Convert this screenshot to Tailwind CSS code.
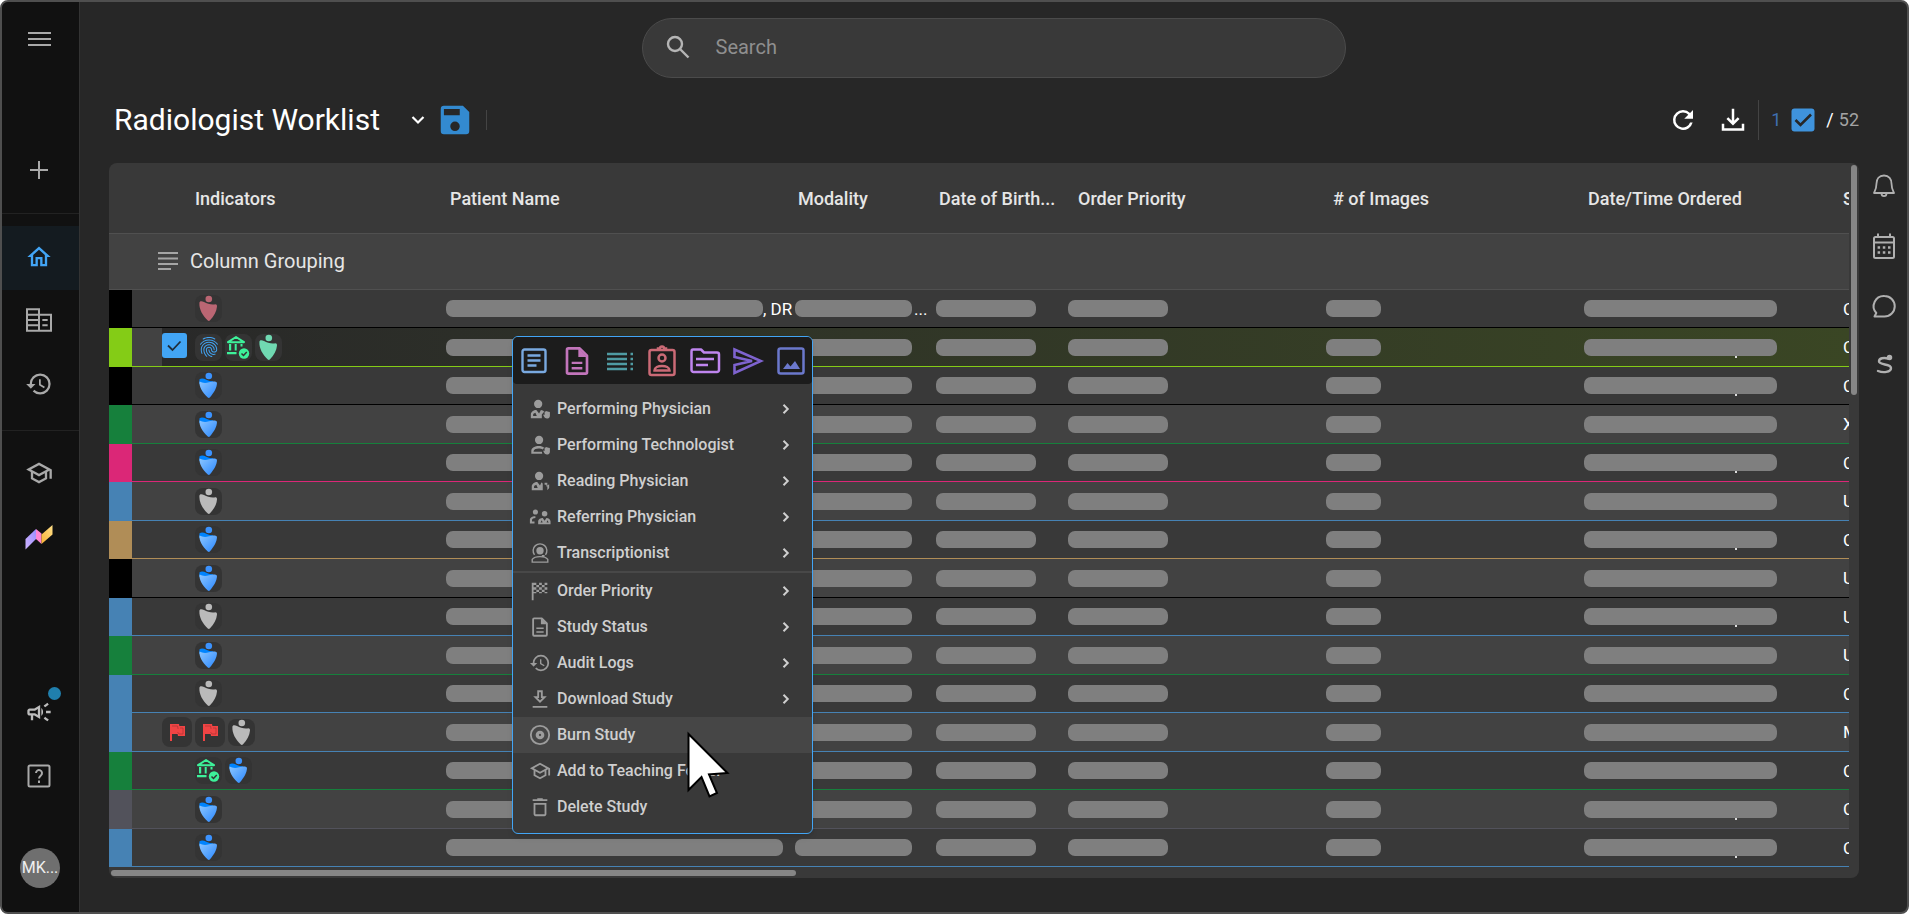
<!DOCTYPE html>
<html lang="en">
<head>
  <meta charset="UTF-8">
  <meta name="viewport" content="width=device-width, initial-scale=1.0">
  <title>Radiologist Worklist</title>
  <script src="https://cdn.jsdelivr.net/npm/@tailwindcss/browser@4"></script>
</head>
<body class="bg-white font-['Roboto',sans-serif] text-[#e6e6e6]">

  <!-- Icon sprite -->
  <svg class="absolute h-0 w-0" aria-hidden="true">
    <defs>
      <linearGradient id="drop" x1="0" y1="0" x2="1" y2="1">
        <stop offset="0" stop-color="#8cc6ff"/>
        <stop offset="0.8" stop-color="#3c93ff"/>
      </linearGradient>
      <symbol id="i-person" viewBox="0 0 27 27">
        <circle cx="13.8" cy="4" r="3.3"/>
        <path d="M4.4 8c0-2 2.200-2.200 4.600-.9 3 1.600 7 2.800 10.600 2.300 1.800-.2 2.500.5 2.400 2-.4 5-3 9.500-7.200 14.200-.6.6-1.400.6-2 0C7.500 20.500 4 14 4.400 8z"/>
      </symbol>
      <symbol id="i-person-blue" viewBox="0 0 27 27">
        <circle cx="13.8" cy="4" r="3.300" fill="#3c93ff"/>
        <path fill="#0084ff" d="M4.400 7.400c2-1.600 4.500-.9 7 .3 2.400 1 4.500 1.500 7 1.600l-4 4L4.500 12z"/>
        <path fill="url(#drop)" d="M4.400 9.600c3 1.400 6 1.900 9.600.7 3-1 7-1.500 8 .5 0 5-3 9.900-7.200 14.800-.6.6-1.400.6-2 0C7 20.500 4.200 15 4.400 9.600z"/>
      </symbol>
      <symbol id="i-library" viewBox="0 0 27 27">
        <path fill="none" stroke="#3df29a" stroke-width="2" stroke-linejoin="round" d="M3 8.200L11 3l8 5.200z"/>
        <path fill="#3df29a" d="M4 10h2.200v6.500H4zM9.700 10h2v6.500h-2zM15.500 10h2v2.500h-2zM2 18h9.500v2.300H2z"/>
        <circle cx="19" cy="19.500" r="5.200" fill="#3df29a"/>
        <path fill="none" stroke="#333" stroke-width="1.500" d="M16.500 19.500l2 2 3.300-3.600"/>
      </symbol>
      <symbol id="i-finger" viewBox="0 0 24 24">
        <path d="M17.81 4.47c-.08 0-.16-.02-.23-.06C15.66 3.42 14 3 12.01 3c-1.98 0-3.86.47-5.570 1.410-.24.13-.54.04-.68-.2-.13-.24-.04-.55.2-.68C7.820 2.520 9.860 2 12.010 2c2.130 0 3.990.47 6.030 1.520.25.13.34.43.21.67-.09.18-.26.28-.44.28zM3.500 9.720c-.1 0-.2-.03-.29-.09-.23-.16-.28-.47-.12-.7.99-1.400 2.250-2.500 3.750-3.270C9.980 4.040 14 4.030 17.150 5.650c1.500.77 2.760 1.860 3.750 3.250.16.22.11.54-.12.7-.23.16-.54.11-.7-.12-.9-1.260-2.040-2.250-3.390-2.940-2.870-1.470-6.540-1.470-9.400.01-1.360.7-2.500 1.700-3.400 2.960-.08.14-.23.21-.39.21zm6.250 12.070c-.13 0-.26-.05-.35-.15-.87-.87-1.340-1.430-2.010-2.640-.69-1.230-1.050-2.730-1.050-4.340 0-2.970 2.540-5.390 5.660-5.390s5.660 2.420 5.660 5.390c0 .28-.22.5-.5.5s-.5-.22-.5-.5c0-2.420-2.090-4.390-4.660-4.390-2.570 0-4.660 1.970-4.660 4.390 0 1.440.32 2.770.93 3.850.64 1.150 1.080 1.640 1.850 2.420.19.2.19.51 0 .71-.11.1-.24.15-.37.15zm7.170-1.850c-1.190 0-2.240-.3-3.100-.89-1.490-1.010-2.380-2.650-2.380-4.390 0-.28.22-.5.5-.5s.5.22.5.5c0 1.410.72 2.740 1.940 3.560.71.48 1.540.71 2.540.71.24 0 .64-.03 1.040-.1.27-.05.53.13.58.41.05.27-.13.53-.41.58-.57.11-1.070.12-1.210.12zM14.910 22c-.04 0-.09-.01-.13-.02-1.590-.44-2.630-1.030-3.720-2.100-1.400-1.390-2.170-3.240-2.170-5.220 0-1.620 1.380-2.940 3.080-2.940 1.700 0 3.080 1.320 3.080 2.940 0 1.070.93 1.940 2.080 1.940s2.080-.87 2.080-1.940c0-3.770-3.250-6.830-7.250-6.830-2.840 0-5.440 1.580-6.610 4.030-.39.81-.59 1.760-.59 2.800 0 .78.07 2.010.67 3.610.1.26-.03.55-.29.64-.26.1-.55-.04-.64-.29-.49-1.310-.73-2.610-.73-3.960 0-1.200.23-2.290.68-3.240 1.330-2.790 4.280-4.600 7.510-4.600 4.550 0 8.250 3.510 8.250 7.830 0 1.620-1.380 2.940-3.080 2.940s-3.080-1.320-3.080-2.940c0-1.070-.93-1.940-2.080-1.940s-2.080.87-2.080 1.940c0 1.710.66 3.310 1.870 4.510.95.94 1.860 1.460 3.270 1.850.27.07.42.35.35.61-.05.23-.26.38-.47.38z"/>
      </symbol>
      <symbol id="i-flag" viewBox="0 0 24 24">
        <path d="M14.400 6L14 4H5v17h2v-7h5.600l.4 2h7V6z"/>
        <path fill="none" stroke="#a33" stroke-width="0.700" d="M7 6h5.500l.6 3M12.500 12l1.500 2h4V8h-3"/>
      </symbol>
      <symbol id="i-school" viewBox="0 0 24 24">
        <path d="M12 3L1 9l4 2.180v6L12 21l7-3.820v-6l2-1.090V17h2V9L12 3zm6.820 6L12 12.720 5.180 9 12 5.280 18.820 9zM17 15.990l-5 2.730-5-2.730v-3.720L12 15l5-2.730v3.720z"/>
      </symbol>
      <symbol id="i-history" viewBox="0 0 24 24">
        <path d="M13 3a9 9 0 0 0-9 9H1l3.890 3.890.07.14L9 12H6c0-3.870 3.130-7 7-7s7 3.130 7 7-3.130 7-7 7c-1.930 0-3.680-.79-4.940-2.060l-1.420 1.420A8.954 8.954 0 0 0 13 21a9 9 0 0 0 0-18zm-1 5v5l4.280 2.540.72-1.210-3.500-2.080V8H12z"/>
      </symbol>
      <symbol id="i-doc" viewBox="0 0 24 24">
        <path fill="none" stroke="currentColor" stroke-width="2" stroke-linejoin="round" d="M14 2.500H5.500a1 1 0 0 0-1 1v17a1 1 0 0 0 1 1h13a1 1 0 0 0 1-1V8z"/>
        <path fill="currentColor" d="M13 2.500V9h6.500zM8 12.500h8v1.800H8zm0 4h8v1.800H8z"/>
      </symbol>
      <symbol id="i-doctor-hand" viewBox="0 0 24 24">
        <circle cx="10" cy="6.500" r="4.500"/>
        <path d="M2 22v-4c0-3 3-5 6-5l3 4 2-3.800c1.600.2 2.700.8 3.500 1.800L14 18v4H2zm2.500-2.300h4L7 16c-1.500.5-2.500 1.200-2.500 2.300z" fill-rule="evenodd"/>
        <path d="M15.500 18.500c0-.8 1-.8 1.500 0V15c.3-.8 1-.8 1.300 0 .3-1 1.200-1 1.500 0 .3-.8 1.200-.8 1.500.3.400-.7 1.300-.5 1.500.3v3.900c0 3-5 4-6.300 1z"/>
      </symbol>
      <symbol id="i-tech-hand" viewBox="0 0 24 24">
        <circle cx="11" cy="6.500" r="4.500"/>
        <path d="M2.500 21.500v-3c0-6 11-7 14-3.500l-1.500 2c-3-2-9.500-1.200-10 1.500v.8h9l.5 2.200z"/>
        <path d="M15.500 18.500c0-.8 1-.8 1.500 0V15c.3-.8 1-.8 1.300 0 .3-1 1.200-1 1.500 0 .3-.8 1.200-.8 1.500.3.400-.7 1.300-.5 1.500.3v3.900c0 3-5 4-6.300 1z"/>
      </symbol>
      <symbol id="i-reader" viewBox="0 0 24 24">
        <circle cx="11" cy="6.500" r="4.500"/>
        <path d="M3 22v-4c0-3 3-5 6-5l3 4 1.500-3.500c1.300.3 1.500 1 1.500 2V22H3zm2.500-2.300h4L8 16c-1.500.5-2.500 1.200-2.500 2.300z" fill-rule="evenodd"/>
        <path d="M17 14h3v3l2-1.500v4L20 22v-4h-1v-2h-2z"/>
      </symbol>
      <symbol id="i-referring" viewBox="0 0 24 24">
        <circle cx="7" cy="6.500" r="2.800"/>
        <circle cx="17" cy="8.500" r="3"/>
        <path d="M1 19v-4c0-2.500 3-4 6-3.800V13c-2 .2-3.700.8-3.700 2.300V17H6v2zM10 20v-3c0-3 3-4 5-4l2 3 2-3c2.500.3 4.500 1.500 4.500 4v3zm2.500-2h2.300l-.8-2.500zm6.700 0h2.300l-1.500-2.500z" fill-rule="evenodd"/>
      </symbol>
      <symbol id="i-headset" viewBox="0 0 24 24">
        <circle cx="12" cy="9.500" r="4"/>
        <path fill="none" stroke="currentColor" stroke-width="1.500" d="M6 14a7.500 7.500 0 1 1 12 0M3.500 22v-3c3-4 14-4 17 0v3zM14 15h3"/>
      </symbol>
      <symbol id="i-checker" viewBox="0 0 24 24">
        <path d="M3 3h2v19H3zM5 3h3v2.500H5zM11 3h3v2.500h-3zM17 3h3v2.500h-3zM8 5.500h3V8H8zM14 5.500h3V8h-3zM5 8h3v2.500H5zM11 8h3v2.500h-3zM17 8h3v2.500h-3zM8 10.500h3V13H8zM14 10.500h3V13h-3zM5 13h3v1.500H5zM11 13h3v1.500h-3zM17 13h3v1.500h-3z"/>
      </symbol>
      <symbol id="i-arrow-down" viewBox="0 0 24 24">
        <path fill="none" stroke="currentColor" stroke-width="2" d="M10 3.500h4V10h3l-5 5-5-5h3zM4 20.500h16"/>
      </symbol>
      <symbol id="i-disc" viewBox="0 0 24 24">
        <circle cx="12" cy="12" r="10" fill="none" stroke="currentColor" stroke-width="2"/>
        <circle cx="12" cy="12" r="3" fill="none" stroke="currentColor" stroke-width="3.500"/>
      </symbol>
      <symbol id="i-trash" viewBox="0 0 24 24">
        <path fill="none" stroke="currentColor" stroke-width="2" d="M6 8.500h12V20a1 1 0 0 1-1 1H7a1 1 0 0 1-1-1zM4 4.500h16M9 3.500h6"/>
      </symbol>
      <symbol id="i-chevron" viewBox="0 0 24 24">
        <path fill="none" stroke="currentColor" stroke-width="4" d="M7 3.500l8.500 8.500L7 20.500"/>
      </symbol>
    </defs>
  </svg>

  <div class="relative flex h-screen min-h-[914px] overflow-hidden rounded-lg border-2 border-[#4f4f4f] bg-[#272727]">

    <!-- Left navigation -->
    <nav aria-label="Main" class="flex w-[78px] shrink-0 flex-col border-r border-[#333] bg-[#111] text-[#a9a9a9]">
      <button aria-label="Menu" class="mt-[5px] flex h-16 items-center justify-center pr-1">
        <svg class="h-6 w-6" viewBox="0 0 24 24" stroke="currentColor" stroke-width="2"><path d="M1 6h23M1 12h23M1 18h23"/></svg>
      </button>
      <button aria-label="New" class="mt-[67px] flex h-16 items-center justify-center pr-1">
        <svg class="h-6 w-6" viewBox="0 0 24 24" stroke="currentColor" stroke-width="2"><path d="M12 3v18M3 12h18"/></svg>
      </button>
      <div class="mt-[11px] mb-3 border-t border-[#222]"></div>
      <a href="#home" aria-label="Home" class="flex h-16 items-center justify-center bg-[#141b20] pr-1 pb-0.5 text-[#42a5f5]">
        <svg class="h-7 w-7" viewBox="0 0 24 24" fill="currentColor"><path d="M12 5.690l5 4.500V18h-2v-6H9v6H7v-7.810l5-4.500M12 3L2 12h3v8h6v-6h2v6h6v-8h3L12 3z"/></svg>
      </a>
      <a href="#facilities" aria-label="Facilities" class="flex h-16 items-center justify-center pr-1 pb-1">
        <svg class="h-8 w-8" viewBox="0 0 24 24" fill="none" stroke="currentColor" stroke-width="1.500"><path d="M3 4h9v16H3zM12 8h9v12h-9M3 8h9M3 12h9M3 16h9M14.500 12h4M14.500 16h4"/></svg>
      </a>
      <a href="#history" aria-label="History" class="flex h-16 items-center justify-center pr-1 pb-1">
        <svg class="h-7 w-7" fill="currentColor"><use href="#i-history"/></svg>
      </a>
      <div class="mt-3 mb-2.5 border-t border-[#222]"></div>
      <a href="#teaching" aria-label="Teaching" class="flex h-16 items-center justify-center pr-1">
        <svg class="h-7 w-7" fill="currentColor"><use href="#i-school"/></svg>
      </a>
      <a href="#insights" aria-label="Insights" class="flex h-16 items-center justify-center pr-1">
        <svg class="h-7 w-7" viewBox="0 0 28 28">
          <defs>
            <linearGradient id="violet" x1="0" y1="1" x2="1" y2="0"><stop offset="0" stop-color="#cfb4ff"/><stop offset="1" stop-color="#9a8cff"/></linearGradient>
            <linearGradient id="amber" x1="0" y1="1" x2="1" y2="0"><stop offset="0" stop-color="#f9b233"/><stop offset="1" stop-color="#ffe08a"/></linearGradient>
          </defs>
          <path fill="url(#violet)" d="M.500 16L11 6v10L.500 26.500z"/>
          <path fill="#ff86d3" d="M11 6l5.500 4.500V21L11 16z"/>
          <path fill="url(#amber)" d="M16.500 11.500L27.500 2v9.500L16.500 21z"/>
        </svg>
      </a>
      <button aria-label="Announcements" class="relative mt-auto flex h-16 items-center justify-center pr-1 text-[#bdbdbd]">
        <svg class="h-7 w-7" viewBox="0 0 24 24" fill="currentColor"><path d="M18 11v2h4v-2h-4zm-2 6.610c.96.71 2.210 1.650 3.200 2.390.4-.53.8-1.070 1.200-1.600-.99-.74-2.240-1.680-3.200-2.400-.4.54-.8 1.080-1.200 1.610zM20.400 5.600c-.4-.53-.8-1.070-1.200-1.600-.99.74-2.240 1.680-3.200 2.400.4.53.8 1.070 1.200 1.600.96-.72 2.210-1.650 3.200-2.400zM4 9c-1.100 0-2 .9-2 2v2c0 1.100.9 2 2 2h1v4h2v-4h1l5 3V6L8 9H4zm5.030 1.710L11 9.530v4.940l-1.970-1.180-.48-.29H4v-2h4.550l.48-.29zM15.500 12c0-1.330-.58-2.530-1.500-3.350v6.690c.92-.81 1.500-2.010 1.500-3.340z"/></svg>
        <span class="absolute top-[7px] right-[18px] h-[13px] w-[13px] rounded-full bg-[#207fad]"></span>
      </button>
      <button aria-label="Help" class="flex h-16 items-center justify-center pr-1">
        <svg class="h-6 w-6" viewBox="0 0 24 24" fill="none" stroke="currentColor" stroke-width="2"><rect x="1.500" y="1.500" width="21" height="21" rx="1.500"/><path d="M9 9a3 3 0 1 1 5 2.300c-1.200 1-2 1.600-2 3.200M12 16.500v2.500"/></svg>
      </button>
      <button class="mt-10 mb-6 ml-[18px] h-10 w-10 overflow-hidden rounded-full bg-[#6f6f6f] text-center text-base text-[#f0f0f0]">MK...</button>
    </nav>

    <main class="flex min-w-0 flex-1 flex-col">
      <!-- Search -->
      <form class="mx-auto mt-4 flex h-15 w-full max-w-[704px] shrink-0 items-center gap-[26px] rounded-full border border-[#4b4b4b] bg-[#393939] px-[23px] pb-0.5">
        <svg class="h-6 w-6 shrink-0" viewBox="0 0 24 24" fill="none" stroke="#b5b5b5" stroke-width="2.400"><circle cx="9" cy="9" r="7"/><path d="M14 14l8.500 8.500"/></svg>
        <input type="search" aria-label="Search" placeholder="Search" class="min-w-0 flex-1 bg-transparent text-xl text-[#ddd] outline-none placeholder:text-[#8f8f8f]">
      </form>

      <!-- Title bar -->
      <header class="mr-12 ml-[29px] flex h-[85px] shrink-0 items-center pb-0.5 pl-[5px] text-white">
        <h1 class="text-[30px] leading-9">Radiologist Worklist</h1>
        <button aria-label="Choose worklist" class="ml-[22px] flex h-8 w-8 items-center justify-center">
          <svg class="h-4 w-4" viewBox="0 0 16 16" fill="none" stroke="currentColor" stroke-width="2.200"><path d="M2.500 5L8 10.500 13.500 5"/></svg>
        </button>
        <button aria-label="Save worklist" class="ml-0.5 text-[#338ad0]">
          <svg class="h-[38px] w-[38px]" viewBox="0 0 24 24" fill="currentColor"><path d="M17 3H5a2 2 0 0 0-2 2v14a2 2 0 0 0 2 2h14a2 2 0 0 0 2-2V7l-4-4zm-5 16a3 3 0 1 1 0-6 3 3 0 0 1 0 6zm3-10H5V5h10v4z"/></svg>
        </button>
        <div class="ml-3 h-5 border-l border-[#444]"></div>

        <div class="ml-auto flex items-center">
          <button aria-label="Refresh" class="mr-5">
            <svg class="h-[30px] w-[30px]" viewBox="0 0 24 24" fill="currentColor"><path d="M17.650 6.350A7.958 7.958 0 0 0 12 4a8 8 0 1 0 7.730 10h-2.080A6 6 0 1 1 12 6c1.660 0 3.140.69 4.220 1.780L13 11h7V4l-2.350 2.350z"/></svg>
          </button>
          <button aria-label="Download" class="mr-2.5">
            <svg class="h-[30px] w-[30px]" viewBox="0 0 24 24" fill="none" stroke="currentColor" stroke-width="2"><path d="M12 3v11M7.500 10.500L12 15l4.500-4.500M4 15v4.500h16V15"/></svg>
          </button>
          <div class="h-10 border-l border-[#444]"></div>
          <div class="flex items-center pl-3 text-lg">
            <span class="text-[#3f6fb0]">1</span>
            <label class="mr-[11px] ml-2.5 flex h-6 w-6 items-center justify-center">
              <input type="checkbox" checked aria-label="Select all" class="peer sr-only">
              <svg class="h-6 w-6" viewBox="0 0 24 24"><rect width="23" height="23" x="0.500" y="0.500" rx="3" fill="#3f93dc"/><path d="M4.500 12l5 5L20 6.500" fill="none" stroke="#272727" stroke-width="2.600"/></svg>
            </label>
            <span>/</span>
            <span class="pl-[5px] text-[#a3a3a3]">52</span>
          </div>
        </div>
      </header>

      <div class="flex min-h-0 flex-1 pb-[34px] pl-[29px]">
        <!-- Worklist grid -->
        <section class="flex min-w-0 flex-1 flex-col overflow-hidden rounded-lg bg-[#393939]">
          <div class="flex min-h-0 flex-1">
            <div class="min-w-0 flex-1 overflow-hidden">
              <table class="w-[1952px] table-fixed border-separate border-spacing-0 text-left">
                <colgroup>
                  <col class="w-[23px]"><col class="w-[60px]"><col class="w-[242px]"><col class="w-[348px]"><col class="w-[141px]"><col class="w-[139px]"><col class="w-[255px]"><col class="w-[255px]"><col class="w-[255px]"><col>
                </colgroup>
                <thead>
                  <tr class="h-[71px] text-lg *:border-b *:border-[#505050] *:pt-0.5 *:font-medium">
                    <th></th>
                    <th></th>
                    <th class="pl-[3px]">Indicators</th>
                    <th class="pl-4">Patient Name</th>
                    <th class="pl-4">Modality</th>
                    <th class="pl-4">Date of Birth...</th>
                    <th class="pl-4">Order Priority</th>
                    <th class="pl-4"># of Images</th>
                    <th class="pl-4">Date/Time Ordered</th>
                    <th class="pl-4">S</th>
                  </tr>
                  <tr class="h-14 bg-[#424242]">
                    <th colspan="10" class="border-b border-[#505050] pb-0.5 font-normal">
                      <div class="flex items-center gap-3 pl-[49px] text-xl">
                        <svg class="h-5 w-5" viewBox="0 0 20 20" stroke="#a5a5a5" stroke-width="2"><path d="M0 2h20M0 7.500h20M0 13h20M0 18h13"/></svg>
                        Column Grouping
                      </div>
                    </th>
                  </tr>
                </thead>
                <tbody id="rows"></tbody>
              </table>
            </div>
            <div class="w-2.5 shrink-0 pt-0.5 pl-0.5">
              <div class="h-[230px] w-1.5 rounded-full bg-[#868686]"></div>
            </div>
          </div>
          <div class="h-2.5 shrink-0 pt-0.5 pl-0.5">
            <div class="h-1.5 w-[685px] rounded-full bg-[#868686]"></div>
          </div>
        </section>

        <!-- Right rail -->
        <aside class="flex w-12 shrink-0 flex-col items-center gap-8 pt-[9px] pl-0.5 text-[#b0b0b0]">
          <button aria-label="Notifications">
            <svg class="h-7 w-7" viewBox="0 0 28 28" fill="none" stroke="currentColor" stroke-width="1.800" stroke-linejoin="round"><path d="M14 3.500c-5 0-7.500 3.500-7.500 8 0 5-1.500 7.500-2.500 9.500h20c-1-2-2.500-4.500-2.500-9.500 0-4.500-2.500-8-7.500-8zM11.500 21.500c0 3.500 5 3.500 5 0"/></svg>
          </button>
          <button aria-label="Calendar">
            <svg class="h-7 w-7" viewBox="0 0 28 28" fill="none" stroke="currentColor" stroke-width="2"><rect x="4" y="5" width="20" height="21" rx="1.500"/><path d="M4 10.500h20M8 1.500V5M20 1.500V5"/><path stroke-width="2.500" stroke-dasharray="2.500 2.700" d="M7.600 15.500h13M7.600 20.500h13"/></svg>
          </button>
          <button aria-label="Messages">
            <svg class="h-7 w-7" viewBox="0 0 28 28" fill="none" stroke="currentColor" stroke-width="2" stroke-linejoin="round"><path d="M14.500 4a10 10 0 1 1 0 20.500H4.500l1.800-3.500A10.200 10.200 0 0 1 14.500 4z"/></svg>
          </button>
          <button aria-label="Assistant">
            <svg class="h-7 w-7" viewBox="0 0 28 28" fill="none" stroke="currentColor" stroke-width="2.400" stroke-linecap="round"><path d="M18 6.500c-4-1-9-.5-9 2.800 0 4.200 12 2.200 12 6.700 0 4.500-8 5-13 3"/><circle cx="19.500" cy="5.500" r="2" fill="currentColor" stroke-width="1.500"/></svg>
          </button>
        </aside>
      </div>
    </main>

    <!-- Context menu -->
    <div role="menu" class="absolute top-[334px] left-[510px] w-[301px] overflow-hidden rounded-md border border-[#42a5f5] bg-[#393939] text-[#cfcfcf] shadow-md">
      <div class="grid h-[47px] grid-cols-7 place-items-center rounded-b bg-[#1c1c1c]">
        <button aria-label="Report" class="text-[#79a9e0]"><svg class="h-7 w-7" viewBox="0 0 28 28" fill="none" stroke="currentColor" stroke-width="2.400"><rect x="2.500" y="2.500" width="23" height="22.500" rx="2"/><path d="M7.500 8.500h13M7.500 13.500h13M7.500 18.500h9"/></svg></button>
        <button aria-label="Document" class="text-[#c275bb]"><svg class="h-8 w-8"><use href="#i-doc"/></svg></button>
        <button aria-label="Worklist" class="text-[#4f9ba3]"><svg class="h-7 w-7" viewBox="0 0 28 28" fill="none" stroke="currentColor" stroke-width="2.500"><path d="M1 7h20M1 12h20M1 17h20M1 22h20M24.500 7H27M24.500 12H27M24.500 17H27M24.500 22H27"/></svg></button>
        <button aria-label="Patient" class="text-[#cb6a76]"><svg class="h-8 w-7" viewBox="0 0 28 32" fill="none" stroke="currentColor" stroke-width="2.500"><rect x="1.500" y="5" width="25" height="25" rx="2"/><circle cx="14" cy="13" r="3.500"/><path d="M6.500 25.500c0-6 15-6 15 0zM10 5V3.500h2a2 2 0 0 1 4 0h2V5"/></svg></button>
        <button aria-label="Folder" class="text-[#bf85ee]"><svg class="h-7 w-8" viewBox="0 0 32 28" fill="none" stroke="currentColor" stroke-width="2.500" stroke-linejoin="round"><path d="M2.500 4.500c0-1 .5-2 1.500-2h8l3 3h13c1 0 2 .8 2 2V23c0 1-1 2-2 2H4.500c-1 0-2-1-2-2zM7 12h18M7 18h12"/></svg></button>
        <button aria-label="Send" class="text-[#7e63cf]"><svg class="h-8 w-8" viewBox="0 0 32 32" fill="none" stroke="currentColor" stroke-width="2.600"><path d="M2.500 4.500L29 16 2.500 28v-8L20 16 2.500 12z"/></svg></button>
        <button aria-label="Images" class="text-[#6b78cc]"><svg class="h-7 w-7" viewBox="0 0 28 28"><rect x="1.500" y="1.500" width="25" height="25" rx="2" fill="none" stroke="currentColor" stroke-width="2.500"/><path fill="currentColor" d="M6 22l4.500-6 3 3.500L18 14l5 8z"/></svg></button>
      </div>
      <div id="menu" class="flex flex-col pt-[7px] pb-2 text-base font-medium"></div>
    </div>

    <!-- Pointer -->
    <svg class="pointer-events-none absolute top-[729px] left-[684px] h-[68px] w-[46px]" viewBox="0 0 46 68" fill="#fff" stroke="#000" stroke-width="2"><path d="M2.500 3v56l13-13 8 19.500 7.500-3.500-8-18.500 18.500-1.500z"/></svg>
  </div>

  <script>
    const BLACK = '#000000', BLUE = '#4682b4', GREEN = '#16803c';

    // color: status stripe, icons: indicator badges, lead: badge ahead of the indicators, last: start of the last column
    const rows = [
      { color: BLACK, icons: ['rose'], last: 'C', extra: true },
      { color: '#84cc16', icons: ['finger', 'library', 'mint'], last: 'C', selected: true, comma: true },
      { color: BLACK, icons: ['blue'], last: 'C', comma: true },
      { color: GREEN, icons: ['blue'], last: 'X' },
      { color: '#db2777', icons: ['blue'], last: 'C', comma: true },
      { color: BLUE, icons: ['gray'], last: 'U' },
      { color: '#b08d57', icons: ['blue'], last: 'C', comma: true },
      { color: BLACK, icons: ['blue'], last: 'U' },
      { color: BLUE, icons: ['gray'], last: 'U', comma: true },
      { color: GREEN, icons: ['blue'], last: 'U' },
      { color: BLUE, icons: ['gray'], last: 'C' },
      { color: BLUE, lead: 'flag', icons: ['flag', 'gray'], last: 'M' },
      { color: GREEN, icons: ['library', 'blue'], last: 'C' },
      { color: '#52525b', icons: ['blue'], last: 'C', comma: true },
      { color: BLUE, icons: ['blue'], last: 'C', comma: true },
    ];

    const badge = (cls, id) => `<span class="flex h-[27px] w-[27px] shrink-0 items-center justify-center rounded-lg bg-[#343434]"><svg class="${cls}"><use href="#${id}"/></svg></span>`;
    const icons = {
      blue: badge('h-[27px] w-[27px]', 'i-person-blue'),
      gray: badge('h-[27px] w-[27px] fill-[#bababa]', 'i-person'),
      rose: badge('h-[27px] w-[27px] fill-[#bb6673]', 'i-person'),
      mint: badge('h-[27px] w-[27px] fill-[#70d9b2]', 'i-person'),
      finger: badge('h-6 w-6 fill-[#42a5f5]', 'i-finger'),
      library: badge('h-[27px] w-[27px]', 'i-library'),
      flag: '<span class="flex h-[30px] w-[30px] shrink-0 items-center justify-center rounded-lg bg-[#343434]"><svg class="h-6 w-6 fill-[#f04444]"><use href="#i-flag"/></svg></span>',
    };

    const checkbox = `
      <label class="flex h-[25px] w-[25px]">
        <input type="checkbox" checked aria-label="Select study" class="sr-only">
        <svg class="h-[25px] w-[25px]" viewBox="0 0 25 25"><rect width="25" height="25" rx="3" fill="#42a5f5"/><path d="M6 12.500l4.500 4.500 8-8.500" fill="none" stroke="#1f2d3a" stroke-width="1.800"/></svg>
      </label>`;

    const comma = '<span class="absolute top-full left-[151px] h-0.5 w-0.5 bg-[#ddd]"></span>';

    document.getElementById('rows').innerHTML = rows.map(row => `
      <tr class="h-[38px] even:h-[39px] ${row.selected ? 'bg-[linear-gradient(90deg,#424242_53px,#292929_53px,#3a4624_1740px)]' : 'even:bg-[#424242]'} *:border-b *:p-0" style="border-color:${row.color}">
        <td class="border-inherit" style="background:${row.color}"></td>
        <td class="border-inherit"><div class="flex pl-[30px] ${row.selected ? 'pb-1' : ''}">${row.selected ? checkbox : ''}${row.lead ? icons[row.lead] : ''}</div></td>
        <td class="border-inherit"><div class="flex items-center gap-[3px] pl-[3px]">${row.icons.map(name => icons[name]).join('')}</div></td>
        <td class="border-inherit"><div class="flex items-center pl-3 text-[17px] leading-5 whitespace-nowrap text-white">
          <span class="h-[17px] shrink-0 rounded-[7px] bg-[#7f7f7f] ${row.extra ? 'w-[317px]' : 'w-[337px]'}"></span>${row.extra ? ', DR' : ''}
        </div></td>
        <td class="border-inherit"><div class="flex items-center gap-0.5 pl-[13px] text-[17px] leading-5 text-white">
          <span class="h-[17px] w-[117px] shrink-0 rounded-[7px] bg-[#7f7f7f]"></span>${row.extra ? '...' : ''}
        </div></td>
        <td class="border-inherit"><div class="ml-[13px] h-[17px] w-[100px] rounded-[7px] bg-[#7f7f7f]"></div></td>
        <td class="border-inherit"><div class="ml-1.5 h-[17px] w-[100px] rounded-[7px] bg-[#7f7f7f]"></div></td>
        <td class="border-inherit"><div class="ml-[9px] h-[17px] w-[55px] rounded-[7px] bg-[#7f7f7f]"></div></td>
        <td class="border-inherit"><div class="relative ml-3 h-[17px] w-[193px] rounded-[7px] bg-[#7f7f7f]">${row.comma ? comma : ''}</div></td>
        <td class="border-inherit"><div class="pl-4 text-[17px] leading-5 text-white">${row.last}</div></td>
      </tr>
    `).join('');

    const items = [
      { label: 'Performing Physician', icon: 'i-doctor-hand', sub: true },
      { label: 'Performing Technologist', icon: 'i-tech-hand', sub: true },
      { label: 'Reading Physician', icon: 'i-reader', sub: true },
      { label: 'Referring Physician', icon: 'i-referring', sub: true },
      { label: 'Transcriptionist', icon: 'i-headset', sub: true },
      { divider: true },
      { label: 'Order Priority', icon: 'i-checker', sub: true },
      { label: 'Study Status', icon: 'i-doc', sub: true },
      { label: 'Audit Logs', icon: 'i-history', sub: true },
      { label: 'Download Study', icon: 'i-arrow-down', sub: true },
      { label: 'Burn Study', icon: 'i-disc', active: true },
      { label: 'Add to Teaching Folder', icon: 'i-school' },
      { label: 'Delete Study', icon: 'i-trash' },
    ];

    document.getElementById('menu').innerHTML = items.map(item => item.divider
      ? '<div class="h-0.5 bg-[#484848]"></div>'
      : `<button role="menuitem" class="flex h-9 items-center gap-1.5 pr-5 pl-4 ${item.active ? 'bg-[#464646]' : ''}">
          <svg class="h-[22px] w-[22px] fill-current text-[#9c9c9c]"><use href="#${item.icon}"/></svg>
          <span class="flex-1 text-left">${item.label}</span>
          ${item.sub ? '<svg class="h-3 w-3"><use href="#i-chevron"/></svg>' : ''}
        </button>`
    ).join('');
  </script>
</body>
</html>
